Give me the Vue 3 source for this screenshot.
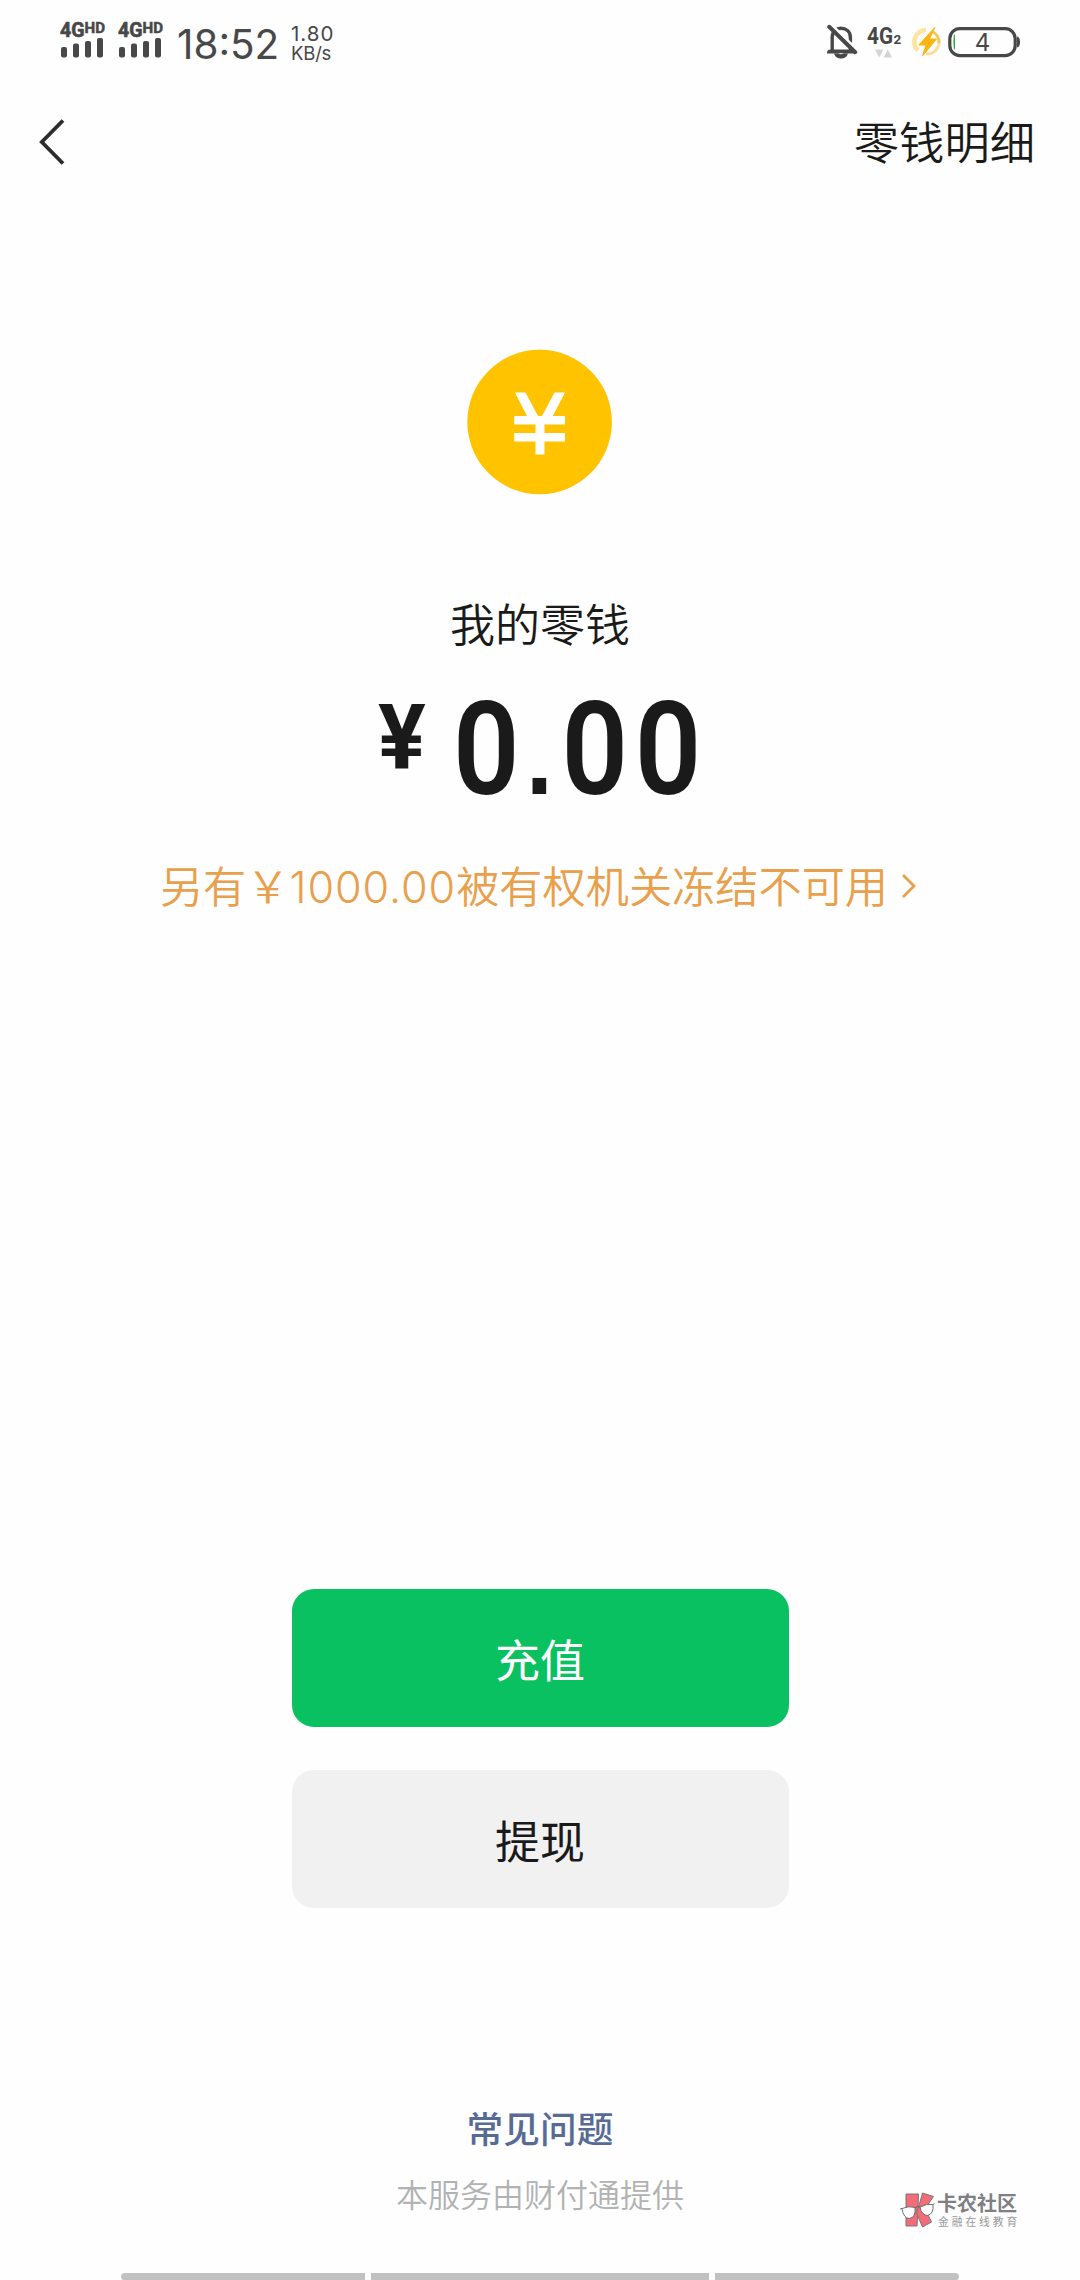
<script setup>
const signals = ['sim1', 'sim2']
const bars = [
  { x: 1, y: 25, h: 10.5 },
  { x: 13, y: 21.5, h: 14 },
  { x: 25, y: 19, h: 16.5 },
  { x: 37, y: 16, h: 19.5 }
]
</script>

<template>
  <div class="screen">
    <header class="status">
      <svg v-for="s in signals" :key="s" class="signal" width="46" height="38" viewBox="0 0 46 38">
        <text class="net" x="0" y="15" textLength="24.5" lengthAdjust="spacingAndGlyphs">4G</text>
        <text class="hd" x="24.5" y="11" textLength="20.5" lengthAdjust="spacingAndGlyphs">HD</text>
        <rect v-for="b in bars" :key="b.x" :x="b.x" :y="b.y" width="6" :height="b.h" rx="2" />
      </svg>
      <span class="time">18:52</span>
      <span class="speed"><span class="rate">1.80</span><span class="unit">KB/s</span></span>
      <span class="grow"></span>
      <svg class="bell" width="32" height="36" viewBox="0 0 32 36">
        <path d="M5.2 27V13.5C5.2 7 9.3 4.3 14 4.3S23.4 7 23.4 13.5V27" fill="none" stroke="#484848" stroke-width="3.4" />
        <path d="M0 28.5Q0 26 3 25.5H26L29 29.5H0Z" />
        <path d="M7 29.5H21Q19.5 34.6 14 34.6T7 29.5Z" />
        <path d="M11.5 29.2H16.5Q14 31.5 11.5 29.2Z" fill="#fff" />
        <path d="M3.8 .2L31.5 27.3" stroke="#fff" stroke-width="3" />
        <path d="M2.2 2.8L28.2 28.2" stroke="#484848" stroke-width="4" stroke-linecap="round" />
      </svg>
      <svg class="data" width="36" height="36" viewBox="0 0 36 36">
        <text class="g4" x="0" y="19.5" textLength="26" lengthAdjust="spacingAndGlyphs">4G</text>
        <text class="g2" x="26.5" y="19.5">2</text>
        <path d="M8 25.5H16.5L12.2 33.5ZM16.5 33.5L20.8 25.5L25 33.5Z" fill="#d4d4d4" />
      </svg>
      <svg class="bolt" width="30" height="32" viewBox="0 0 30 32">
        <path d="M14 4A12 12 0 0 0 6 24.5" fill="none" stroke="#fde4a0" stroke-width="4.5" />
        <path d="M14 28A12 12 0 0 0 27 16" fill="none" stroke="#fcdf97" stroke-width="3" />
        <path d="M20 5.5A12 12 0 0 1 27 17" fill="none" stroke="#f8c650" stroke-width="3" />
        <path d="M22.8 1.5L6.8 19H14L10.5 30L24.5 13H17.5Z" fill="#f9b510" stroke="#f9b510" stroke-width="1" />
      </svg>
      <svg class="battery" width="73" height="32" viewBox="0 0 73 32">
        <rect x="1.8" y="2.6" width="65.4" height="27" rx="10" fill="none" stroke="#484848" stroke-width="3.2" />
        <path d="M69 10.5Q72 11 72 16T69 21.5Z" />
        <path d="M5.8 9.5Q4.8 16 5.8 22.5L7 24V8Z" fill="#35b04b" />
        <text class="level" x="34.5" y="25" text-anchor="middle">4</text>
      </svg>
    </header>

    <nav class="nav">
      <svg width="28" height="48" viewBox="0 0 28 48">
        <path d="M24 2.5L2.8 24L24 45.5" fill="none" stroke="#2c2c2c" stroke-width="3.8" />
      </svg>
      <span class="detail">零钱明细</span>
    </nav>

    <main class="main">
      <svg class="coin" width="146" height="146" viewBox="0 0 146 146">
        <circle cx="72.6" cy="73" r="72.3" fill="#ffc300" />
        <path d="M48 43.5H58.5L71 67H75L87.5 43.5H98L85.8 67H98V75.5H77.5V84H98V92.5H77.5V105.5H68.5V92.5H47.2V84H68.5V75.5H47.2V67H60Z" fill="#fff" />
      </svg>
      <h1 class="title">我的零钱</h1>
      <div class="amount">
        <span class="yen">¥</span>
        <span class="num">0<span class="dot">.</span><span class="tenth">0</span>0</span>
      </div>
      <a class="frozen">
        <span>另有￥<span class="digits">1000.00</span>被有权机关冻结不可用</span>
        <svg width="16" height="26" viewBox="0 0 16 26">
          <path d="M2 2L13 13L2 24" fill="none" stroke="#e8a04c" stroke-width="2.8" />
        </svg>
      </a>
    </main>

    <section class="actions">
      <button class="btn primary">充值</button>
      <button class="btn plain">提现</button>
    </section>

    <footer class="footer">
      <a class="faq">常见问题</a>
      <p class="provider">本服务由财付通提供</p>
    </footer>

    <div class="brand">
      <svg width="36" height="38" viewBox="0 0 36 38">
        <g fill="#f26d78" stroke="#77777b" stroke-width="1">
          <path d="M6 2H18.5L18 16L17 34H6Z" />
          <path d="M22.5 1L33.5 4.5L25 17L31.5 30L22.5 35L16.5 21L18.5 15Z" />
        </g>
        <g fill="#fff" stroke="#626266" stroke-width=".9">
          <path d="M2 16.5Q9 13.5 15 15.5Q16 25.5 9.5 26.5Q3.5 26.5 2 16.5Z" />
          <path d="M20 15Q26.5 11.5 33 12.5Q34 22 27.5 23.5Q21.5 23 20 15Z" />
          <path d="M0 17L2 16.5M15 16Q17.5 13.5 20 15M33 12.5L34.5 11.5" fill="none" />
        </g>
      </svg>
      <div class="words">
        <span class="name">卡农社区</span>
        <span class="slogan">金融在线教育</span>
      </div>
    </div>

    <div class="gesture"><i class="side"></i><i class="mid"></i><i class="side last"></i></div>
  </div>
</template>

<style>
body {
  margin: 0;
  background: #fefefe;
}
</style>

<style scoped>
.screen {
  position: relative;
  box-sizing: border-box;
  width: 1080px;
  height: 2280px;
  overflow: hidden;
  display: flex;
  flex-direction: column;
  background: #fefefe;
  color: #1a1a1a;
  font-family: "Noto Sans CJK SC", sans-serif;
}
.status {
  height: 86px;
  padding: 0 60px;
  display: flex;
  align-items: flex-start;
  color: #484848;
  fill: #484848;
  font-family: Inter, sans-serif;
}
.signal { margin: 21.5px 12px 0 0; overflow: visible; }
.net { font: 700 20px Roboto, sans-serif; stroke: #484848; stroke-width: .6; }
.hd { font: 700 14.2px Roboto, sans-serif; stroke: #484848; stroke-width: .5; }
.time {
  margin: 21px 0 0 1px;
  width: 114px;
  font-size: 40.4px;
  line-height: 48px;
}
.speed {
  display: flex;
  flex-direction: column;
  margin-top: 24px;
  line-height: 19.5px;
}
.rate { font-size: 20.5px; letter-spacing: 1px; }
.unit { font-size: 18.5px; letter-spacing: -.2px; }
.grow { flex: 1; }
.bell { margin: 24px 8px 0 0; }
.data { margin: 24px 9px 0 0; overflow: visible; }
.g4 { font: 700 24px Roboto, sans-serif; }
.g2 { font: 700 13.5px Roboto, sans-serif; }
.bolt { margin: 26px 6px 0 0; }
.battery { margin: 26px -1px 0 0; }
.level { font: 400 24px Inter, sans-serif; }
.nav {
  height: 112px;
  padding: 0 45px 0 39px;
  display: flex;
  align-items: center;
  justify-content: space-between;
}
.detail { margin-top: -4px; font-size: 45.3px; font-weight: 350; line-height: 66px; }
.main {
  display: flex;
  flex-direction: column;
  align-items: center;
}
.coin { margin-top: 151px; }
.title {
  margin: 95px 0 0;
  font-size: 45px;
  font-weight: 350;
  line-height: 66px;
}
.amount {
  width: 324px;
  height: 130px;
  margin-top: 29px;
  display: flex;
  align-items: flex-start;
  font-family: Roboto, sans-serif;
}
.yen {
  flex: none;
  width: 75px;
  font-size: 91px;
  font-weight: 700;
  line-height: 106px;
  transform: scaleX(.98);
  transform-origin: 0 0;
}
.num {
  flex: none;
  font-size: 130.5px;
  font-weight: 600;
  line-height: 130px;
  white-space: nowrap;
  transform: scaleX(.893);
  transform-origin: 0 0;
}
.dot {
  margin: 0 9.7px 0 7.3px;
  font-family: "Liberation Sans", sans-serif;
  font-size: 108px;
  font-weight: 700;
  line-height: 1;
}
.tenth { margin-right: 7.3px; }
.frozen {
  margin-top: 38px;
  display: flex;
  align-items: center;
  gap: 13px;
  margin-right: 3px;
  color: #e8a04c;
  font-size: 43.2px;
  font-weight: 350;
  line-height: 62px;
  white-space: nowrap;
}
.digits { font-family: Inter, sans-serif; letter-spacing: .9px; }
.actions {
  margin-top: 671px;
  display: flex;
  flex-direction: column;
  align-items: center;
  gap: 43px;
}
.btn {
  width: 497px;
  height: 138px;
  padding: 0;
  border: 0;
  border-radius: 22px;
  font: 400 45px "Noto Sans CJK SC", sans-serif;
}
.primary { background: #09c160; color: #fff; }
.plain { background: #f1f1f1; color: #1a1a1a; }
.footer {
  margin-top: 194px;
  display: flex;
  flex-direction: column;
  align-items: center;
}
.faq { color: #576b95; font-size: 36.7px; font-weight: 500; line-height: 50px; }
.provider { margin: 18px 0 0; color: #b2b2b2; font-size: 32px; font-weight: 350; line-height: 46px; }
.brand {
  position: absolute;
  left: 900px;
  top: 2192px;
  display: flex;
  gap: 1px;
}
.words { display: flex; flex-direction: column; white-space: nowrap; margin-top: -1px; }
.name { color: #808084; font-size: 20px; font-weight: 700; line-height: 23px; }
.slogan { color: #999; font-size: 10.8px; letter-spacing: 2.9px; line-height: 14px; padding-left: 1px; }
.gesture {
  position: absolute;
  left: 121px;
  bottom: 0;
  display: flex;
  gap: 6px;
}
.gesture i { height: 7px; background: #c1c1c1; }
.side { width: 244px; border-radius: 4px 0 0 3px; }
.mid { width: 338px; }
.last { border-radius: 0 4px 3px 0; }
</style>
